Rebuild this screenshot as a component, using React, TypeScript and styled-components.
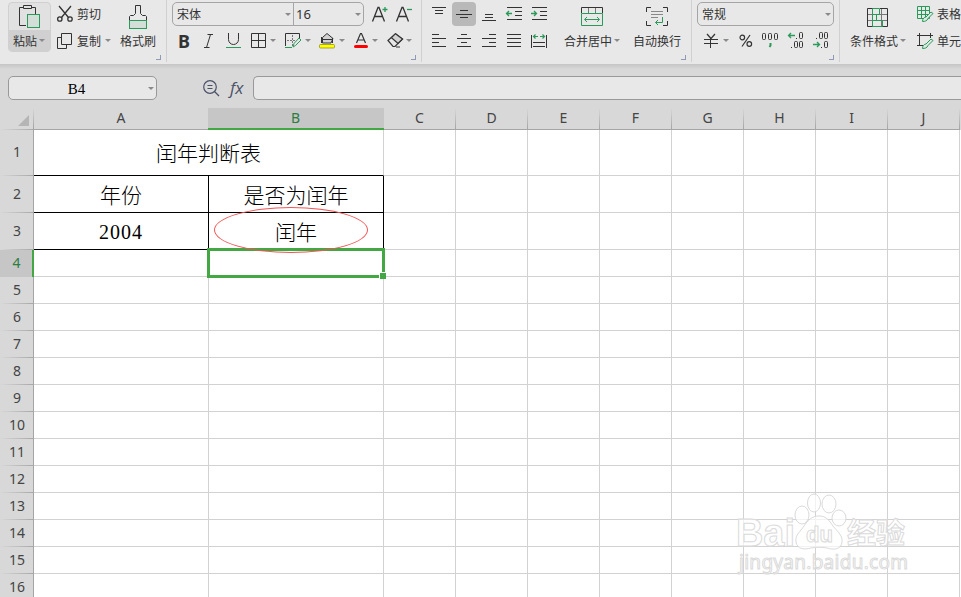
import React from "react";
import styled, { createGlobalStyle, css } from "styled-components";

const INK = "#333333";
const GREEN = "#2a9a5b";
const SELECT = "#43a744";

const GlobalStyle = createGlobalStyle`
  * { box-sizing: border-box; }
  body {
    margin: 0;
    overflow: hidden;
    background: #fff;
    font-family: "Noto Sans CJK SC", "Noto Sans", sans-serif;
    font-size: 12px;
    color: ${INK};
  }
  svg { display: block; flex: none; overflow: visible; }
`;

const Window = styled.div`
  display: flex;
  flex-direction: column;
  width: 961px;
  height: 597px;
  overflow: hidden;
`;

/* ---------- ribbon ---------- */

const Ribbon = styled.div`
  display: flex;
  flex: none;
  height: 64px;
  background: #e8e8e8;
`;

const Group = styled.div<{ $width: number }>`
  position: relative;
  display: flex;
  flex: none;
  width: ${(p) => p.$width}px;
  height: 62px;
  border-right: 1px solid #d0d0d0;
`;

const OpenGroup = styled(Group)`
  border-right: 0;
`;

const Launcher = styled.i`
  position: absolute;
  right: 5px;
  bottom: 2px;
  width: 5px;
  height: 5px;
  border-right: 1px solid #8f9bb5;
  border-bottom: 1px solid #8f9bb5;
`;

const Stack = styled.div<{ $before?: number }>`
  display: flex;
  flex: none;
  flex-direction: column;
  gap: 2px;
  padding-top: 2px;
  margin-left: ${(p) => p.$before ?? 0}px;
`;

const Tools = styled.div`
  display: flex;
  align-items: center;
  height: 24px;
  & + & {
    height: 25px;
  }
`;

const Slot = styled.span<{ $before?: number; $width?: number }>`
  display: flex;
  flex: none;
  align-items: center;
  justify-content: center;
  margin-left: ${(p) => p.$before ?? 0}px;
  width: ${(p) => (p.$width ? `${p.$width}px` : "auto")};
`;

const ActiveSlot = styled(Slot)`
  height: 24px;
  border-radius: 4px;
  background: #b9b9b9;
`;

const Label = styled.span`
  line-height: 16px;
  white-space: nowrap;
`;

const Caret = styled.i<{ $before?: number }>`
  flex: none;
  width: 6px;
  height: 3px;
  margin-left: ${(p) => p.$before ?? 2}px;
  border: 3px solid transparent;
  border-top-color: #8a8a8a;
  border-bottom: 0;
`;

const BigTool = styled.div<{ $before: number }>`
  display: flex;
  flex: none;
  flex-direction: column;
  align-items: flex-start;
  margin-left: ${(p) => p.$before}px;
`;

const BigIcon = styled.div<{ $width: number }>`
  display: flex;
  align-items: center;
  justify-content: center;
  width: ${(p) => p.$width}px;
  height: 32px;
  padding-top: 2px;
`;

const BigLabel = styled.div`
  display: flex;
  align-items: center;
  height: 17px;
`;

const PasteButton = styled.div`
  flex: none;
  width: 43px;
  height: 50px;
  margin: 2px 0 0 8px;
  border: 1px solid #d0d0d0;
  border-radius: 4px;
  background: #e1e1e1;
  overflow: hidden;
`;

const PasteTop = styled.div`
  display: flex;
  height: 27px;
  padding: 2px 0 0 9px;
`;

const PasteMenu = styled.div`
  display: flex;
  align-items: center;
  height: 21px;
  padding-left: 4px;
  background: #d0d0d0;
`;

const Combo = styled.div<{ $before: number }>`
  display: flex;
  flex: none;
  height: 24px;
  margin-left: ${(p) => p.$before}px;
  border: 1px solid #a5a5a5;
  border-radius: 5px;
`;

const ComboPart = styled.div<{ $width: number }>`
  display: flex;
  align-items: center;
  justify-content: space-between;
  width: ${(p) => p.$width}px;
  padding: 0 2px 0 4px;
  & + & {
    padding-left: 2px;
    border-left: 1px solid #a5a5a5;
  }
`;

const SizeLabel = styled(Label)`
  font-family: "Noto Sans", sans-serif;
  font-size: 13px;
`;

const BoldMark = styled.span`
  font: 700 18px/24px "Noto Sans", sans-serif;
`;

/* ---------- formula bar ---------- */

const FormulaBar = styled.div`
  display: flex;
  flex: none;
  align-items: flex-start;
  height: 44px;
  padding: 12px 0 0 8px;
  background: linear-gradient(#c5c5c5, #d8d8d8 5px);
`;

const NameBox = styled.div`
  display: flex;
  flex: none;
  align-items: center;
  width: 149px;
  height: 24px;
  padding-right: 2px;
  border: 1px solid #999;
  border-radius: 5px;
  background: #e8e8e8;
`;

const CellName = styled.span`
  flex: 1;
  padding: 2px 4px 0 0;
  text-align: center;
  font: 15px/20px "Liberation Serif", serif;
  color: #000;
`;

const FormulaTools = styled.div`
  display: flex;
  flex: none;
  align-items: center;
  gap: 10px;
  width: 96px;
  height: 24px;
  padding-left: 46px;
`;

const FxMark = styled.span`
  font: italic 17px/22px "Open Sans", sans-serif;
  color: #4b5268;
`;

const FormulaInput = styled.div`
  flex: 1;
  height: 24px;
  border: 1px solid #999;
  border-right: 0;
  border-radius: 5px 0 0 5px;
  background: #e8e8e8;
`;

/* ---------- sheet ---------- */

const HeaderRow = styled.div`
  display: flex;
  flex: none;
  height: 22px;
  background: #d8d8d8;
`;

const Corner = styled.div`
  display: flex;
  flex: none;
  align-items: flex-end;
  justify-content: flex-end;
  width: 34px;
  padding: 0 5px 4px 0;
  background:
    linear-gradient(#d8d8d8, #a0a0a0) right / 1px 100% no-repeat,
    linear-gradient(90deg, #d8d8d8, #a8a8a8) bottom / 100% 1px no-repeat;
`;

const ColumnHead = styled.div<{ $width: number; $active?: boolean }>`
  flex: none;
  width: ${(p) => p.$width}px;
  height: 22px;
  padding-right: 1px;
  border-bottom: 1px solid #a5a5a5;
  background: linear-gradient(#d8d8d8, #a5a5a5) right / 1px 100% no-repeat;
  text-align: center;
  font: 14px/20px "Noto Sans", sans-serif;
  color: #444;
  ${(p) =>
    p.$active &&
    css`
      width: ${p.$width + 1}px;
      margin-left: -1px;
      border-bottom: 2px solid ${SELECT};
      background: #c6c6c6;
      color: #2b7d42;
    `}
`;

const Row = styled.div<{ $height: number }>`
  display: flex;
  flex: none;
  height: ${(p) => p.$height}px;
`;

const RowHead = styled.div<{ $active?: boolean }>`
  display: flex;
  flex: none;
  align-items: center;
  justify-content: center;
  width: 34px;
  padding: 0 0 2px 1px;
  border-right: 1px solid #a5a5a5;
  background:
    linear-gradient(90deg, #d8d8d8, #a8a8a8) bottom / 100% 1px no-repeat,
    #d8d8d8;
  font: 14px/18px "Noto Sans", sans-serif;
  color: #444;
  ${(p) =>
    p.$active &&
    css`
      border-right: 2px solid ${SELECT};
      background: #c6c6c6;
      color: #2b7d42;
    `}
`;

const Cell = styled.div<{ $width: number; $right?: boolean; $bottom?: boolean }>`
  position: relative;
  display: flex;
  flex: none;
  align-items: center;
  justify-content: center;
  width: ${(p) => p.$width}px;
  border-right: 1px solid ${(p) => (p.$right ? "#000" : "#d2d2d2")};
  border-bottom: 1px solid ${(p) => (p.$bottom ? "#000" : "#d2d2d2")};
  font: 300 21px/26px "Noto Sans CJK SC", sans-serif;
  color: #000;
  white-space: nowrap;
`;

const TitleCell = styled(Cell)`
  padding-bottom: 2px;
`;

const Digits = styled.span`
  padding-top: 2px;
  font: 20px/26px "Liberation Serif", serif;
  letter-spacing: 1px;
`;

const Selection = styled.div`
  position: absolute;
  z-index: 1;
  inset: -2px;
  border: 3px solid ${SELECT};
  &::after {
    content: "";
    position: absolute;
    right: -5px;
    bottom: -5px;
    width: 7px;
    height: 7px;
    border: solid #fff;
    border-width: 1px 0 0 1px;
    background: ${SELECT};
    right: -4px;
    bottom: -4px;
    width: 6px;
    height: 6px;
  }
`;

const Oval = styled.div`
  position: absolute;
  z-index: 2;
  left: 5px;
  top: -6px;
  width: 154px;
  height: 46px;
  border: 1px solid #f25555;
  border-radius: 50%;
`;

const Watermark = styled.div`
  position: absolute;
  left: 730px;
  top: 485px;
`;

/* ---------- icons ---------- */

type IconProps = { w: number; h: number; color?: string; children: React.ReactNode };

const Icon = ({ w, h, color = INK, children }: IconProps) => (
  <svg width={w} height={h} viewBox={`0 0 ${w} ${h}`} fill="none" stroke={color}>
    {children}
  </svg>
);

const PasteIcon = () => (
  <Icon w={22} h={24}>
    <path d="M5 2.500H1.500v18H8M14 2.500h3.500V9M5.500.5h8v3h-8z" />
    <rect x="9.500" y="9.500" width="12" height="13" fill="#d3ded8" stroke={GREEN} />
  </Icon>
);

const ScissorsIcon = () => (
  <Icon w={16} h={16}>
    <g strokeWidth="1.300">
      <path d="M2 0l9.500 11.500M14 0L4.500 11.500" />
      <circle cx="2.800" cy="13" r="2.200" />
      <circle cx="13" cy="13" r="2.200" />
    </g>
  </Icon>
);

const CopyIcon = () => (
  <Icon w={15} h={16}>
    <path d="M4 4.500H.5v11h9V12M4.500.5h10v11h-10z" />
  </Icon>
);

const BrushIcon = () => (
  <Icon w={18} h={24}>
    <path d="M.5 15v-3.500l1-1h3l2-2v-8h5v8l2 2h3l1 1V15" />
    <rect x=".5" y="15.500" width="17" height="8" fill="#d3ded8" stroke={GREEN} />
  </Icon>
);

const FontSizeIcon = ({ grow }: { grow?: boolean }) => (
  <Icon w={16} h={16}>
    <path d="M.5 15.500L6 1.500h1l5.500 14M2.500 10.500h8" strokeWidth="1.300" />
    <path d={grow ? "M10.500 3.500h5M13 1v5" : "M11 3.500h5"} stroke={GREEN} strokeWidth="1.300" />
  </Icon>
);

const ItalicIcon = () => (
  <Icon w={9} h={14}>
    <path d="M3.500.5H9M0 13.500h5.500M6.500.5l-4 13" />
  </Icon>
);

const UnderlineIcon = () => (
  <Icon w={15} h={15}>
    <path d="M2.500 0v6.500a5 5 0 0 0 10 0V0" />
    <path d="M0 14.500h15" stroke={GREEN} />
  </Icon>
);

const BordersIcon = () => (
  <Icon w={15} h={15}>
    <path d="M.5.5h14v14H.5zM7.500.5v14M.5 7.500h14" />
  </Icon>
);

const DrawBorderIcon = () => (
  <Icon w={17} h={16}>
    <path d="M.5 13V.5h14V5" />
    <path d="M7.500 2v11M2 7.500h9" stroke="#777" strokeDasharray="2 1" />
    <path d="M0 14.500h7M8 14l1-3.500L14 5l2 2-5.500 5.500z" stroke={GREEN} />
  </Icon>
);

const FillIcon = () => (
  <Icon w={16} h={16}>
    <path d="M3.500 4.500L8 .5l6 5-2 4.500H3.500z" fill="#d2d2d2" />
    <path d="M2 6.500h11M2.500 4v6M13.500 5v5" />
    <rect x=".5" y="11.500" width="15" height="3.500" rx="1" fill="#ffff00" stroke="#888800" strokeWidth=".7" />
  </Icon>
);

const FontColorIcon = () => (
  <Icon w={14} h={15}>
    <path d="M2.500 10L6.500.5h1l4 9.500M4 7h6" strokeWidth="1.200" />
    <path d="M1.500 13.500h11" stroke="#ff0000" strokeWidth="3" strokeLinecap="round" />
  </Icon>
);

const EraserIcon = () => (
  <Icon w={17} h={15}>
    <path d="M1 7.500L8.500.7l7 5.300L8 13.500H6z" strokeWidth="1.200" />
    <path d="M4.500 4.700L8.500.7l7 5.300-4.500 4.500z" fill="#d2d2d2" strokeWidth="1.200" />
    <path d="M9 14h4" />
  </Icon>
);

const Lines = ({ d }: { d: string }) => (
  <Icon w={16} h={14}>
    <path d={d} />
  </Icon>
);

const IndentIcon = ({ back }: { back?: boolean }) => (
  <Icon w={16} h={14}>
    <path d="M1 .5h15M9 4.500h7M9 8.500h7M1 12.500h15" />
    <path
      d={back ? "M6 6.500H.5M3 4L.5 6.500 3 9" : "M0 6.500h5.500M3 4l2.500 2.500L3 9"}
      stroke={GREEN}
      strokeWidth="1.300"
    />
  </Icon>
);

const DistributeIcon = () => (
  <Icon w={16} h={14}>
    <path d="M.5 1v13M15.500 1v13M2 8.500h12M2 12.500h12" />
    <path d="M7 2.500H2.500M4.500.5l-2 2 2 2M9 2.500h4.500M11.500.5l2 2-2 2" stroke={GREEN} strokeWidth="1.200" />
  </Icon>
);

const MergeIcon = () => (
  <Icon w={22} h={20}>
    <path d="M7.500 1v5M14.500 1v5" stroke="#777" />
    <path d="M.5 6V.5h21V6" />
    <path d="M.5 6.500h21v12H.5zM4 12.500h14M6 10l-2.500 2.500L6 15M16 10l2.500 2.500L16 15" stroke={GREEN} />
  </Icon>
);

const WrapIcon = () => (
  <Icon w={22} h={20}>
    <path d="M5 .5H.5V5M17 .5h4.500V5M5 18.500H.5V14M17 18.500h4.500V14" />
    <path d="M5 4.500h12M5 7.500h12M5 10.500h7" stroke="#888" />
    <path d="M16.500 10v5.500h-7M12 13l-2.500 2.500L12 18" stroke={GREEN} />
  </Icon>
);

const YenIcon = () => (
  <Icon w={14} h={14}>
    <path d="M3 0l4 4.500L11 0" strokeWidth="1.200" />
    <path d="M0 5.500h14M0 9.500h14M6.500 4v10" />
  </Icon>
);

const PercentIcon = () => (
  <Icon w={14} h={14}>
    <g strokeWidth="1.200">
      <path d="M11 1L3 12.500" />
      <circle cx="3.300" cy="3.500" r="2.300" />
      <circle cx="10.300" cy="10" r="2.300" />
    </g>
  </Icon>
);

const Zero = ({ x, y }: { x: number; y: number }) => (
  <rect x={x + 0.5} y={y + 0.5} width="3" height="6" rx="1" />
);

const ThousandsIcon = () => (
  <Icon w={17} h={16}>
    <Zero x={0} y={0} />
    <Zero x={6} y={0} />
    <Zero x={12} y={0} />
    <path d="M8.500 10v2.500L7.500 14" stroke={GREEN} strokeWidth="2" />
  </Icon>
);

const DecimalIcon = ({ more }: { more?: boolean }) => (
  <Icon w={16} h={17}>
    <Zero x={more ? 11 : 6} y={0} />
    {!more && <Zero x={11} y={0} />}
    <Zero x={11} y={9} />
    {more && <Zero x={6} y={9} />}
    <path d={more ? "M8 6.500h1M3 15.500h1" : "M3 6.500h1M8 15.500h1"} />
    <path
      d={more ? "M7 3.500H.5M3 1L.5 3.500 3 6" : "M0 12.500h6.500M4 10l2.500 2.500L4 15"}
      stroke={GREEN}
      strokeWidth="1.300"
    />
  </Icon>
);

const ConditionalIcon = () => (
  <Icon w={21} h={19}>
    <path d="M.5 6.500h20M.5 12.500h20M14.500.5v18" stroke="#777" />
    <path d="M6 .5H.5v18H6M13 .5h7.500v18H15" />
    <path d="M5.500.5h7v6h-7zM5.500 6.500h4v6h-4zM5.500 12.500h10v6h-10z" stroke={GREEN} />
  </Icon>
);

const BrushStroke = () => (
  <path d="M5.500 15.500c0-3 2-4.500 3.500-4.500l5-5 2 1.500-5 5c-1 2.500-3 3-5.500 3z" stroke={GREEN} fill="#dfe8e3" />
);

const TableStyleIcon = () => (
  <Icon w={16} h={16}>
    <path d="M.5.5h12v12H.5zM4.500.5v12M8.500.5v12M.5 4.500h12M.5 8.500h12" stroke={GREEN} />
    <BrushStroke />
  </Icon>
);

const CellStyleIcon = () => (
  <Icon w={16} h={16}>
    <path d="M0 2.500h16M2.500 0v12M13.500 0v5M0 12.500h6" />
    <BrushStroke />
  </Icon>
);

const SearchIcon = () => (
  <Icon w={17} h={17} color="#4b5268">
    <circle cx="7" cy="7" r="6.300" strokeWidth="1.200" />
    <path d="M11.500 11.500L16 16" strokeWidth="1.300" />
    <path d="M4.500 5.500h5M4.500 8.500h5" />
  </Icon>
);

const BaiduMark = () => (
  <svg width="190" height="95" viewBox="0 0 190 95" fill="#fff" fillOpacity=".7" stroke="#dadada">
    <g fontFamily="Liberation Sans, sans-serif" fontWeight="700">
      <text x="6" y="61" fontSize="39" textLength="59" lengthAdjust="spacingAndGlyphs">Bai</text>
      <path d="M89 31c7 0 10 4 14 10 5 6 10 10 9 16-1 8-9 8-15 6-5-1-11-1-16 0-7 2-14 1-15-6-1-7 4-10 8-16 4-6 8-10 15-10z" />
      <ellipse cx="72" cy="30" rx="7" ry="9" />
      <ellipse cx="84" cy="18" rx="6.500" ry="9" />
      <ellipse cx="99" cy="19" rx="7" ry="9" />
      <ellipse cx="109" cy="33" rx="7" ry="8" />
      <text x="76" y="57" fontSize="22" textLength="27">du</text>
      <text x="117" y="59" fontFamily="Noto Sans CJK SC, sans-serif" fontSize="29">经验</text>
    </g>
    <text x="9" y="84" fontFamily="Noto Sans, sans-serif" fontSize="19" textLength="169">
      jingyan.baidu.com
    </text>
  </svg>
);

/* ---------- data ---------- */

const COLUMNS = ["C", "D", "E", "F", "G", "H", "I", "J"];
const BLANK_ROWS = [5, 6, 7, 8, 9, 10, 11, 12, 13, 14, 15, 16];

const BlankCells = () => (
  <>
    {COLUMNS.map((c) => (
      <Cell key={c} $width={72} />
    ))}
  </>
);

const RibbonBar = () => (
  <Ribbon>
    <Group $width={167}>
      <PasteButton>
        <PasteTop><PasteIcon /></PasteTop>
        <PasteMenu><Label>粘贴</Label><Caret /></PasteMenu>
      </PasteButton>
      <Stack $before={5}>
        <Tools>
          <Slot $width={17}><ScissorsIcon /></Slot>
          <Slot $before={4}><Label>剪切</Label></Slot>
        </Tools>
        <Tools>
          <Slot $width={16}><CopyIcon /></Slot>
          <Slot $before={5}><Label>复制</Label></Slot>
          <Caret $before={4} />
        </Tools>
      </Stack>
      <BigTool $before={9}>
        <BigIcon $width={36}><BrushIcon /></BigIcon>
        <BigLabel><Label>格式刷</Label></BigLabel>
      </BigTool>
      <Launcher />
    </Group>

    <Group $width={255}>
      <Stack>
        <Tools>
          <Combo $before={5}>
            <ComboPart $width={120}><Label>宋体</Label><Caret /></ComboPart>
            <ComboPart $width={70}><SizeLabel>16</SizeLabel><Caret /></ComboPart>
          </Combo>
          <Slot $before={8}><FontSizeIcon grow /></Slot>
          <Slot $before={8}><FontSizeIcon /></Slot>
        </Tools>
        <Tools>
          <Slot $before={9} $width={16}><BoldMark>B</BoldMark></Slot>
          <Slot $before={9} $width={15}><ItalicIcon /></Slot>
          <Slot $before={10} $width={15}><UnderlineIcon /></Slot>
          <Slot $before={10} $width={15}><BordersIcon /></Slot>
          <Caret $before={4} />
          <Slot $before={9} $width={17}><DrawBorderIcon /></Slot>
          <Caret $before={3} />
          <Slot $before={8} $width={16}><FillIcon /></Slot>
          <Caret $before={4} />
          <Slot $before={9} $width={14}><FontColorIcon /></Slot>
          <Caret $before={4} />
          <Slot $before={9} $width={17}><EraserIcon /></Slot>
          <Caret $before={2} />
        </Tools>
      </Stack>
      <Launcher />
    </Group>

    <Group $width={270}>
      <Stack $before={4}>
        <Tools>
          <Slot $width={26}><Lines d="M1 .5h14M4 3.500h8M4 6.500h8" /></Slot>
          <ActiveSlot $width={24}><Lines d="M4 3.500h8M0 7.500h16M4 10.500h8" /></ActiveSlot>
          <Slot $width={26}><Lines d="M4 7.500h8M4 10.500h8M1 13.500h14" /></Slot>
          <Slot $width={24}><IndentIcon back /></Slot>
          <Slot $width={26}><IndentIcon /></Slot>
        </Tools>
        <Tools>
          <Slot $width={26}><Lines d="M1 .5h7M1 4.500h14M1 8.500h7M1 12.500h14" /></Slot>
          <Slot $width={24}><Lines d="M5 .5h6M1 4.500h14M5 8.500h6M1 12.500h14" /></Slot>
          <Slot $width={26}><Lines d="M8 .5h7M1 4.500h14M8 8.500h7M1 12.500h14" /></Slot>
          <Slot $width={24}><Lines d="M1 .5h14M1 4.500h14M1 8.500h14M1 12.500h14" /></Slot>
          <Slot $width={26}><DistributeIcon /></Slot>
        </Tools>
      </Stack>
      <BigTool $before={12}>
        <BigIcon $width={56}><MergeIcon /></BigIcon>
        <BigLabel><Label>合并居中</Label><Caret /></BigLabel>
      </BigTool>
      <BigTool $before={13}>
        <BigIcon $width={48}><WrapIcon /></BigIcon>
        <BigLabel><Label>自动换行</Label></BigLabel>
      </BigTool>
      <Launcher />
    </Group>

    <Group $width={148}>
      <Stack>
        <Tools>
          <Combo $before={5}>
            <ComboPart $width={135}><Label>常规</Label><Caret /></ComboPart>
          </Combo>
        </Tools>
        <Tools>
          <Slot $before={12}><YenIcon /></Slot>
          <Caret $before={5} />
          <Slot $before={10}><PercentIcon /></Slot>
          <Slot $before={9}><ThousandsIcon /></Slot>
          <Slot $before={9}><DecimalIcon more /></Slot>
          <Slot $before={9}><DecimalIcon /></Slot>
        </Tools>
      </Stack>
      <Launcher />
    </Group>

    <OpenGroup $width={121}>
      <BigTool $before={10}>
        <BigIcon $width={55}><ConditionalIcon /></BigIcon>
        <BigLabel><Label>条件格式</Label><Caret /></BigLabel>
      </BigTool>
      <Stack $before={11}>
        <Tools>
          <TableStyleIcon />
          <Slot $before={4}><Label>表格</Label></Slot>
        </Tools>
        <Tools>
          <CellStyleIcon />
          <Slot $before={4}><Label>单元</Label></Slot>
        </Tools>
      </Stack>
    </OpenGroup>
  </Ribbon>
);

const Sheet = () => (
  <>
    <HeaderRow>
      <Corner>
        <Icon w={11} h={11} color="none"><path d="M11 0v11H0z" fill="#b5b5b5" /></Icon>
      </Corner>
      <ColumnHead $width={175}>A</ColumnHead>
      <ColumnHead $width={175} $active>B</ColumnHead>
      {COLUMNS.map((c) => (
        <ColumnHead key={c} $width={72}>{c}</ColumnHead>
      ))}
    </HeaderRow>
    <Row $height={46}>
      <RowHead>1</RowHead>
      <TitleCell $width={350} $bottom>闰年判断表</TitleCell>
      <BlankCells />
    </Row>
    <Row $height={37}>
      <RowHead>2</RowHead>
      <Cell $width={175} $right $bottom>年份</Cell>
      <Cell $width={175} $right $bottom>是否为闰年</Cell>
      <BlankCells />
    </Row>
    <Row $height={37}>
      <RowHead>3</RowHead>
      <Cell $width={175} $right $bottom><Digits>2004</Digits></Cell>
      <Cell $width={175} $right $bottom>闰年<Oval /></Cell>
      <BlankCells />
    </Row>
    <Row $height={27}>
      <RowHead $active>4</RowHead>
      <Cell $width={175} />
      <Cell $width={175}><Selection /></Cell>
      <BlankCells />
    </Row>
    {BLANK_ROWS.map((n) => (
      <Row key={n} $height={27}>
        <RowHead>{n}</RowHead>
        <Cell $width={175} />
        <Cell $width={175} />
        <BlankCells />
      </Row>
    ))}
  </>
);

export default function App() {
  return (
    <Window>
      <GlobalStyle />
      <RibbonBar />
      <FormulaBar>
        <NameBox><CellName>B4</CellName><Caret $before={0} /></NameBox>
        <FormulaTools><SearchIcon /><FxMark>fx</FxMark></FormulaTools>
        <FormulaInput />
      </FormulaBar>
      <Sheet />
      <Watermark><BaiduMark /></Watermark>
    </Window>
  );
}
